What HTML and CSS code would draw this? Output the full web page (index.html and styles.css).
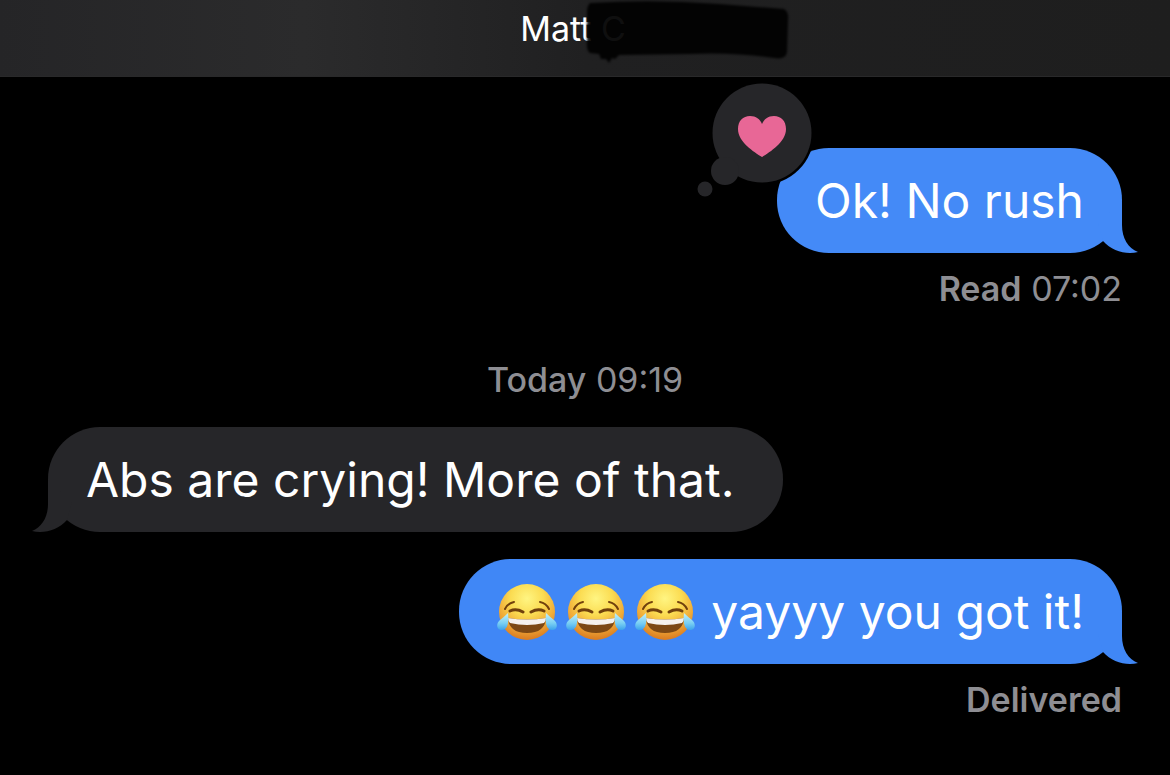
FILE: index.html
```html
<!DOCTYPE html>
<html lang="en">
  <head>
    <meta charset="UTF-8" />
    <meta name="viewport" content="width=device-width, initial-scale=1.0" />
    <title>Messages</title>
    <link rel="stylesheet" href="styles.css">
  </head>
  <body>
    <!-- shared shapes -->
    <svg class="sprites" aria-hidden="true">
      <defs>
        <radialGradient id="face" cx="50%" cy="26%" r="74%">
          <stop offset="0" stop-color="#fff582" />
          <stop offset="0.4" stop-color="#fbdc52" />
          <stop offset="0.72" stop-color="#f0aa38" />
          <stop offset="1" stop-color="#d97a20" />
        </radialGradient>
        <linearGradient id="tear" x1="0" y1="0" x2="0" y2="1">
          <stop offset="0" stop-color="#c5f1fa" />
          <stop offset="0.6" stop-color="#79cff3" />
          <stop offset="1" stop-color="#3ca2ec" />
        </linearGradient>
      </defs>
      <symbol id="tail" viewBox="0 0 40 56">
        <path d="M24 4V28C24 41 30 51 40 55C28 58 14 54 5 44L0 26Z" />
      </symbol>
      <symbol id="joy" viewBox="0 0 60 58">
        <circle cx="30" cy="29" r="28" fill="url(#face)" />
        <g fill="none" stroke="#70400d" stroke-linecap="round">
          <path d="M8 26Q11 20 17 19M52 26Q49 20 43 19" stroke-width="2" />
          <path d="M13 28Q19 25 26 29M34 29Q41 25 47 28" stroke-width="3" />
        </g>
        <path d="M11 35Q30 38 49 35Q48 50 30 50Q12 50 11 35Z" fill="#7d4814" />
        <path d="M11 35Q30 38 49 35Q49 38 47 40Q30 44 13 40Q11 38 11 35Z" fill="#f6f1ed" />
        <path d="M11 30C12 39 11 47 5 47C-1 47 -1 40 3 37Q7 34 11 30Z" fill="url(#tear)" />
        <path d="M49 30C48 39 49 47 55 47C61 47 61 40 57 37Q53 34 49 30Z" fill="url(#tear)" />
      </symbol>
    </svg>

    <header class="topbar">
      <h1 class="contact">
        Matt <span class="initial">C</span>
        <svg class="scribble" viewBox="0 0 208 64" aria-hidden="true">
          <path d="M6 3Q70 -1 135 4L200 9Q205 12 204 20L203 52Q202 60 190 58Q150 52 105 54L35 55L31 59L28 58L25 63L22 59L17 59L15 54L6 53Q2 50 3 40V12Q3 6 6 3Z" />
        </svg>
      </h1>
    </header>

    <main class="thread">
      <div class="bubble sent">
        Ok! No rush
        <svg class="tail"><use href="#tail" /></svg>
        <svg class="reaction" viewBox="0 0 116 116" role="img" aria-label="Loved">
          <circle class="reaction-ring" cx="65" cy="51" r="52" />
          <circle cx="65" cy="51" r="49.5" />
          <circle cx="28" cy="89" r="14" />
          <circle cx="8" cy="107" r="7.5" />
          <path class="heart" d="M65 75C57 70 41 60 41 47C41 39 46 34 53 34C59 34 63 37 65 42C67 37 71 34 77 34C84 34 89 39 89 47C89 60 73 70 65 75Z" />
        </svg>
      </div>
      <p class="status"><b>Read</b> 07:02</p>

      <p class="date"><span>Today</span> 09:19</p>

      <div class="bubble received">
        Abs are crying! More of that.
        <svg class="tail"><use href="#tail" /></svg>
      </div>

      <div class="bubble sent last">
        <span class="emojis" role="img" aria-label="Tears of joy, three times">
          <svg><use href="#joy" /></svg>
          <svg><use href="#joy" /></svg>
          <svg><use href="#joy" /></svg>
        </span>
        yayyy you got it!
        <svg class="tail"><use href="#tail" /></svg>
      </div>
      <p class="status"><b>Delivered</b></p>
    </main>
  </body>
</html>
```
FILE: styles.css
```css
* {
  box-sizing: border-box;
}
body {
  margin: 0;
  background-color: #000;
  color: #fff;
  font-family: Inter, "Liberation Sans", sans-serif;
}
.sprites {
  position: absolute;
  width: 0;
  height: 0;
}

/* top bar */
.topbar {
  display: flex;
  justify-content: center;
  padding: 9px 48px 27px;
  background: linear-gradient(90deg, #252527, #2b2b2c 26%, #202021 50%, #1e1e1e);
  border-bottom: 1px solid #29292a;
}
.contact {
  position: relative;
  margin: 0;
  padding-right: 24px;
  font-size: 34px;
  font-weight: 400;
  line-height: 40px;
}
.initial {
  color: #999;
}
.scribble {
  position: absolute;
  left: 64px;
  top: -9px;
  width: 208px;
  height: 64px;
  filter: blur(1px);
  fill: #000;
  fill-opacity: 0.9;
}

/* messages */
.thread {
  display: flex;
  flex-direction: column;
  padding: 71px 48px 48px;
}
.bubble {
  position: relative;
  display: flex;
  align-items: center;
  padding: 22px 38px;
  border-radius: 52px;
  font-size: 48px;
  line-height: 61px;
}
.sent {
  align-self: flex-end;
  background-color: #448af7;
  fill: #448af7;
}
.received {
  align-self: flex-start;
  padding-right: 48px;
  background-color: #262629;
  fill: #262629;
}
.last {
  margin-top: 27px;
  background-color: #4087f6;
  fill: #4087f6;
}
.tail {
  position: absolute;
  right: -16px;
  bottom: 0;
  width: 40px;
  height: 56px;
}
.received .tail {
  right: auto;
  left: -16px;
  transform: scaleX(-1);
}

.reaction {
  position: absolute;
  left: -80px;
  top: -66px;
  width: 116px;
  height: 116px;
  overflow: visible;
  fill: #262629;
}
.reaction-ring {
  fill: #000;
}
.heart {
  fill: #e86796;
}

.emojis {
  display: flex;
  gap: 9px;
  margin-right: 16px;
}
.emojis svg {
  width: 60px;
  height: 58px;
}

/* small grey lines */
.status,
.date {
  margin: 0;
  color: #8e8e93;
  font-size: 34px;
  line-height: 40px;
}
.status {
  margin-top: 16px;
  text-align: right;
}
.status b {
  font-weight: 600;
}
.date {
  margin: 51px 0 27px;
  text-align: center;
}
.date span {
  font-weight: 500;
}
```
